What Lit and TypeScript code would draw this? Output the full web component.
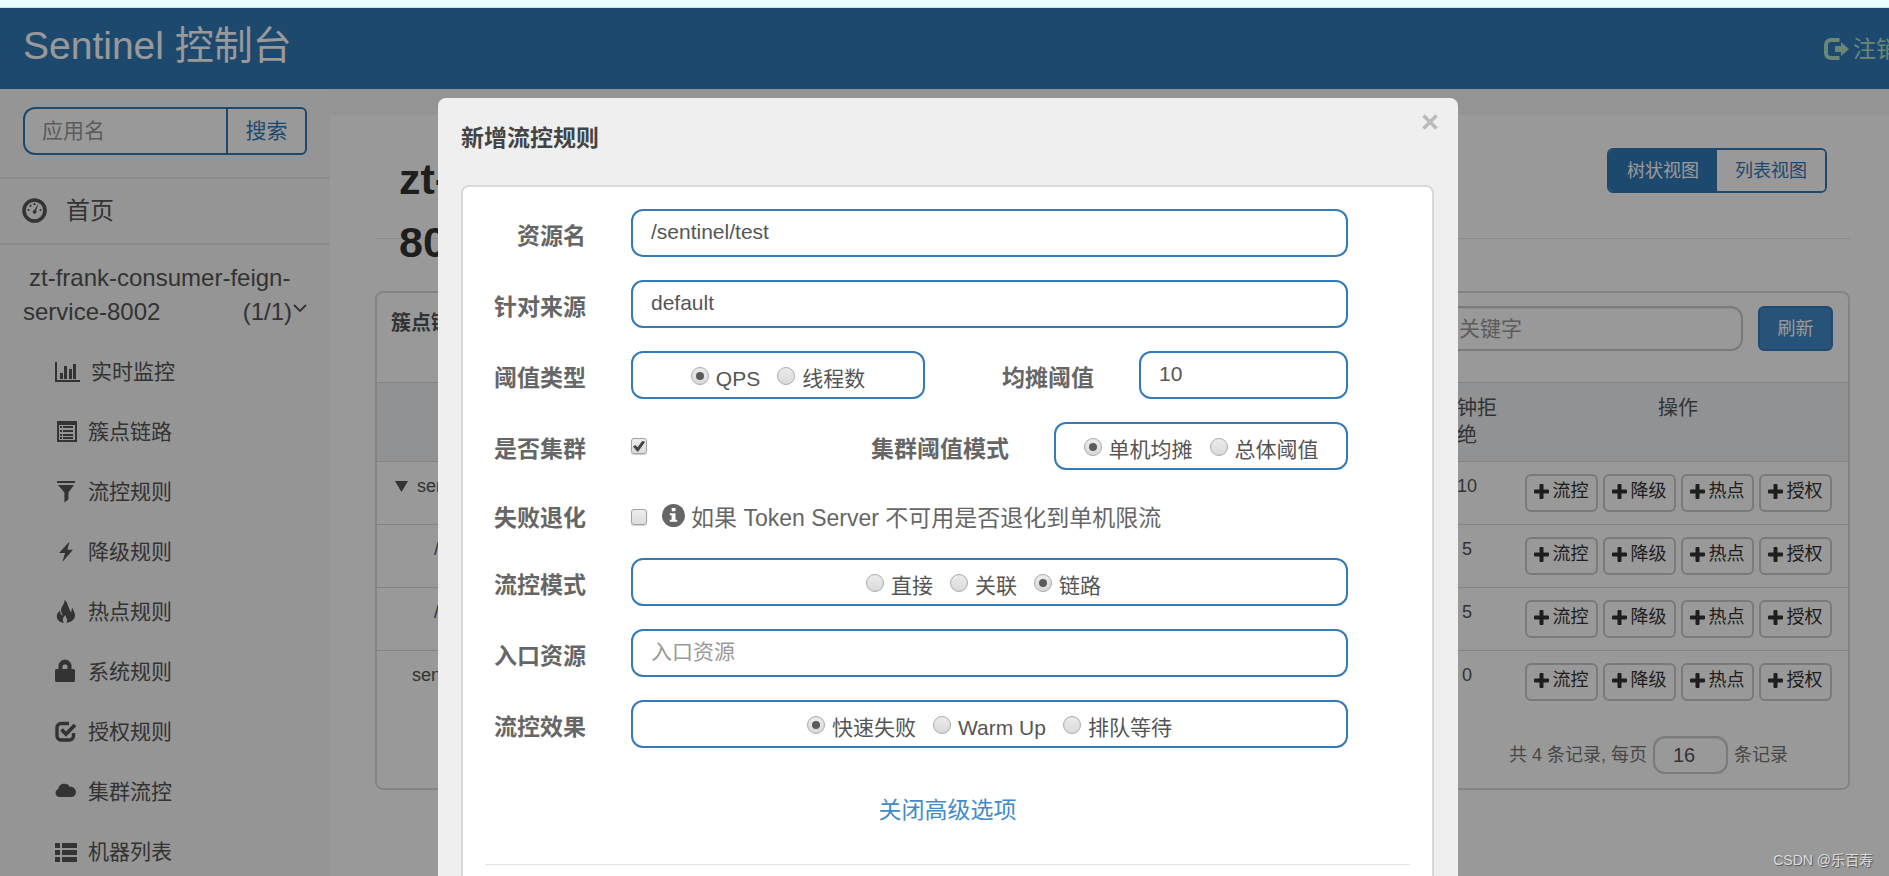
import { LitElement, html, css, svg } from "lit";
import { customElement } from "lit/decorators.js";

/* The sidebar icons are drawn on a 22px grid. */
const icons: Record<string, unknown> = {
  chart: svg`<path d="M0 1h2v18h23v2H0z"/><path d="M5 12h3v6H5zM9 5h3v13H9zM14 8h3v10h-3zM18 3h3v15h-3z"/>`,
  clipboard: svg`<path fill-rule="evenodd" d="M2 0h20v21H2zM4 4v15h16V4z"/><path d="M5 5h2v2H5zM8 5h10v2H8zM5 9h2v2H5zM8 9h10v2H8zM5 13h2v2H5zM8 13h10v2H8zM5 16h2v2H5zM8 16h10v2H8z"/>`,
  filter: svg`<path d="M2 0h18v2H2zM3 4h16l-5.600 7.600V18.500l-4 2.900V11.600z"/>`,
  flash: svg`<path d="M14.500 0.500 4 12h6L7.400 21 18 8.800h-5.600z"/>`,
  fire: svg`<path d="M9.500-1C10 3 6 5.500 6 9.500c0 2 1.500 3.500 1.500 5-1.500-.5-2.500-2-2.300-5C3 11 1.800 13 1.800 15.200 1.800 19 5 21.500 9 21.800 6.500 18.500 8.500 16 10.500 14c0 2.500 2.800 4 1 7.800 4.500-.3 8.500-3 8.500-7.500 0-3-2-4.500-2.300-7.300-1.200 1-1.500 2.500-1.200 4.200-2-.7-1.800-3.200-3-5.200C12.500 4 12.500 1 9.500-1z"/>`,
  lock: svg`<path fill-rule="evenodd" d="M3.500 8V5a6 6 0 0 1 13 0v3H18.500a1.500 1.500 0 0 1 1.500 1.500v10a1.500 1.500 0 0 1-1.500 1.500H1.500A1.500 1.500 0 0 1 0 19.500v-10A1.500 1.500 0 0 1 1.500 8zM7.500 8h5V5.500a2 2 0 0 0-2-2h-1a2 2 0 0 0-2 2z"/>`,
  check: svg`<path d="M14 2.500H6a4 4 0 0 0-4 4V15a4 4 0 0 0 4 4h8.500a4 4 0 0 0 4-4v-3" fill="none" stroke="currentColor" stroke-width="3.400"/><path d="M6.500 8.500l4.500 4.500L20 4" fill="none" stroke="currentColor" stroke-width="3.800"/>`,
  cloud: svg`<path d="M4 16a4.200 4.200 0 0 1-.8-8A6.200 6.200 0 0 1 14.800 6 5.100 5.100 0 1 1 17 16z"/>`,
  list: svg`<path d="M0 2h5v5H0zM7 2h15v5H7zM0 9h5v5H0zM7 9h15v5H7zM0 16h5v5H0zM7 16h15v5H7z"/>`,
};

interface MenuItem { icon: string; text: string; wide?: boolean }
const MENU: MenuItem[] = [
  { icon: "chart", text: "实时监控", wide: true },
  { icon: "clipboard", text: "簇点链路" },
  { icon: "filter", text: "流控规则" },
  { icon: "flash", text: "降级规则" },
  { icon: "fire", text: "热点规则" },
  { icon: "lock", text: "系统规则" },
  { icon: "check", text: "授权规则" },
  { icon: "cloud", text: "集群流控" },
  { icon: "list", text: "机器列表" },
];

const ROWS = [
  { level: "root", open: true, name: "sentinel_web_context", passed: 20, blocked: 10 },
  { level: "child", open: false, name: "/sentinel/test", passed: 10, blocked: 5 },
  { level: "child", open: false, name: "/sentinel/link", passed: 10, blocked: 5 },
  { level: "leaf", open: false, name: "sentinel_default_context", passed: 0, blocked: 0 },
];
const ACTIONS = ["流控", "降级", "热点", "授权"];

@customElement("app-root")
export class AppRoot extends LitElement {
  static styles = css`
    :host {
      display: flex;
      flex-direction: column;
      height: 100vh;
      overflow: hidden;
      font-family: "Liberation Sans", "Noto Sans CJK SC", sans-serif;
      font-size: 21px;
      line-height: 24px;
      color: #555;
      background: #fff;
    }
    * { box-sizing: border-box; }
    button, input { font: inherit; color: inherit; margin: 0; }
    a { color: inherit; text-decoration: none; }
    svg { display: block; fill: currentColor; flex: none; overflow: visible; }
    h1, h2, h3 { margin: 0; font-weight: 700; }

    .strip { flex: none; height: 8px; background: #eaffff; border-bottom: 1px solid #d3e2e6; }
    .stage { position: relative; flex: 1; min-height: 0; overflow: hidden; display: flex; flex-direction: column; }

    .topbar { flex: none; height: 81px; background: #337ab7; display: flex; justify-content: space-between; align-items: center; padding-left: 23px; }
    .brand { color: #fff; font-size: 39px; line-height: 60px; padding-bottom: 6px; }
    .logout { flex: none; width: 65px; display: flex; align-items: center; gap: 3px; color: #b1e0c4; font-size: 23px; white-space: nowrap; }
    .body { flex: 1; min-height: 0; display: flex; }

    .sidebar { flex: none; width: 330px; background: #f8f8f8; }
    .search { display: flex; height: 88px; padding: 18px 23px 22px; }
    .search-box { flex: 1; min-width: 0; height: 48px; border: 2px solid #337ab7; border-right: 0; border-radius: 12px 0 0 12px; background: #fff; padding: 0 17px; }
    .search-btn { width: 81px; height: 48px; border: 2px solid #337ab7; border-radius: 0 6px 6px 0; background: #fff; color: #337ab7; padding: 0; }
    input::placeholder { color: #999; opacity: 1; }
    .home { display: flex; align-items: center; gap: 19px; height: 68px; padding-left: 22px; border-top: 2px solid #e9e9e9; border-bottom: 2px solid #e9e9e9; font-size: 24px; }
    .home svg { margin-bottom: 2px; }
    .app { display: flex; align-items: flex-end; justify-content: space-between; padding: 0 23px 13px; font-size: 24px; line-height: 34px; height: 97px; }
    .app-name { display: flex; flex-direction: column; white-space: nowrap; width: 200px; }
    .app-name .lead { padding-left: 6px; }
    .count { display: flex; align-items: center; gap: 1px; }
    .menu { list-style: none; margin: 0; padding: 0; }
    .menu a { display: flex; align-items: center; gap: 11px; height: 60px; padding-left: 55px; }

    .main { flex: 1; min-width: 0; background: #fff; border-top: 26px solid #f7f7f7; padding: 0 39px 0 45px; }
    .page-head { display: flex; justify-content: space-between; align-items: flex-start; height: 124px; border-bottom: 1px solid #e7e7e7; padding: 33px 23px 0 24px; color: #333; }
    .page-head h1 { font-size: 43px; line-height: 63px; max-width: 50%; }
    .views { display: flex; border: 2px solid #337ab7; border-radius: 6px; height: 45px; overflow: hidden; }
    .views button { border: 0; background: #fff; color: #337ab7; font-size: 18px; padding: 0 18px; }
    .views .active { background: #337ab7; color: #fff; }

    .card { margin-top: 52px; border: 2px solid #ddd; border-radius: 8px; }
    .card-head { display: flex; gap: 15px; height: 89px; padding: 13px 15px 0 14px; }
    .card-head h2 { flex: 1; font-size: 20px; line-height: 34px; }
    .filter { width: 305px; height: 45px; border: 2px solid #ccc; border-radius: 12px; padding: 0 19px; background: #fff; box-shadow: inset 0 1px 1px rgba(0, 0, 0, 0.075); }
    .refresh { width: 75px; height: 45px; border: 2px solid #357ebd; border-radius: 6px; background: #428bca; color: #fff; font-size: 18px; padding: 0; }
    table { width: 100%; table-layout: fixed; border-collapse: separate; border-spacing: 0; }
    th { font-weight: 400; font-size: 20px; line-height: 27px; padding: 12px 6px; background: #f1f4f7; border-top: 1px solid #ddd; vertical-align: top; text-align: center; }
    td { font-size: 18px; line-height: 24px; padding: 12px 6px; border-top: 1px solid #ddd; vertical-align: top; text-align: center; }
    .col-num { width: 82px; }
    .col-act { width: 340px; }
    .name { text-align: left; }
    .root { padding-left: 18px; }
    .child { padding-left: 57px; }
    .leaf { padding-left: 35px; }
    .node { display: flex; align-items: center; gap: 9px; }
    .acts { display: flex; justify-content: center; gap: 5px; }
    .acts button { display: flex; align-items: center; justify-content: center; gap: 4px; width: 73px; height: 38px; border: 2px solid #ccc; border-radius: 6px; background: #fff; color: #333; font-size: 18px; padding: 0 0 4px; }
    .pager { display: flex; justify-content: flex-end; align-items: center; gap: 6px; padding: 23px 60px 14px 0; font-size: 18px; color: #777; }
    .pager label { display: flex; align-items: center; gap: 6px; }
    .pager input { width: 75px; height: 38px; border: 2px solid #ccc; border-radius: 12px; padding: 0 18px; font-size: 20px; color: #555; background: #fff; box-shadow: inset 0 1px 1px rgba(0, 0, 0, 0.075); }

    .overlay { position: absolute; inset: 0; display: flex; justify-content: center; background: rgba(0, 0, 0, 0.4); padding: 90px 0 0 7px; }
    .dialog { width: 1020px; display: flex; flex-direction: column; background: #efefef; border-radius: 8px 8px 0 0; padding: 0 24px 0 23px; }
    .dialog-head { flex: none; display: flex; justify-content: space-between; height: 87px; padding-top: 24px; }
    .dialog-head h3 { font-size: 23px; line-height: 32px; color: #444; }
    .close { align-self: flex-start; margin: -12px -8px 0 0; border: 0; background: none; padding: 4px; color: #bbb; }
    .panel { flex: 1; background: #fff; border: 2px solid #d8d8d8; border-bottom: 0; border-radius: 8px 8px 0 0; padding: 22px; color: #555; }
    .rows { display: flex; flex-direction: column; gap: 23px; padding-right: 62px; }
    .row { display: flex; gap: 45px; }
    .label { flex: none; width: 101px; text-align: right; font-size: 23px; font-weight: 700; line-height: 34px; padding-top: 10px; color: #666; white-space: nowrap; }
    .label.grow { flex: 1; width: auto; }
    .text { flex: 1; min-width: 0; height: 48px; border: 2px solid #337ab7; border-radius: 12px; background: #fff; padding: 0 18px 2px; }
    .text.short { flex: none; width: 209px; }
    .group { flex: 1; display: flex; justify-content: center; gap: 17px; height: 48px; margin: 0; border: 2px solid #337ab7; border-radius: 12px; padding: 13px 0 0; }
    .group.half { flex: none; width: 294px; }
    .group.trail { padding-right: 12px; }
    .group label { display: flex; gap: 7px; line-height: 26px; white-space: nowrap; }
    input[type="radio"] { appearance: none; flex: none; width: 18px; height: 18px; margin-top: 1px; border: 1px solid #aaa; border-radius: 50%; background: linear-gradient(#ececec, #d9d9d9); display: grid; place-items: center; }
    input[type="radio"]:checked::before { content: ""; width: 8px; height: 8px; border-radius: 50%; background: #5c5c5c; }
    input[type="checkbox"] { appearance: none; flex: none; width: 16px; height: 16px; border: 1px solid #a2a2a2; border-radius: 3px; background: linear-gradient(#eee, #dcdcdc); box-shadow: 0 1px 1px rgba(0, 0, 0, 0.2); display: grid; place-items: center; }
    input[type="checkbox"]:checked::before { content: ""; width: 12px; height: 11px; background: #444; clip-path: polygon(0 55%, 20% 42%, 38% 62%, 80% 0, 100% 14%, 44% 100%, 34% 100%); }
    .tick { margin-top: 16px; }
    .compact .label { padding-top: 8px; }
    .fallback { display: flex; gap: 15px; }
    .info { display: flex; gap: 6px; align-items: center; font-size: 23px; line-height: 34px; padding-top: 8px; height: 42px; color: #666; white-space: nowrap; }
    .info svg { margin-bottom: 5px; }
    .more { display: block; text-align: center; color: #428bca; font-size: 23px; line-height: 34px; margin: 45px 0 37px; }
    .rule { border: 0; border-top: 1px solid #e5e5e5; margin: 0; }

    .mark { position: absolute; right: 16px; bottom: 6px; font-size: 14px; line-height: 20px; color: #dcdcdc; text-shadow: 1px 1px 1px #555; }
  `;

  private radios(name: string, items: string[], checked: number) {
    return items.map(
      (t, i) => html`<label><input type="radio" name=${name} .checked=${i === checked} />${t}</label>`
    );
  }

  private sidebar() {
    return html`
      <nav class="sidebar">
        <form class="search">
          <input class="search-box" type="text" placeholder="应用名" aria-label="应用名" />
          <button class="search-btn" type="button">搜索</button>
        </form>
        <a class="home" href="#home">
          <svg width="25" height="25" viewBox="0 0 25 25">
            <circle cx="12.500" cy="12.500" r="10.500" fill="none" stroke="currentColor" stroke-width="3.600" />
            <path d="M16.500 5.500 14.200 12.600a1.900 1.900 0 1 1-1.800-.7z" />
            <circle cx="6.500" cy="12" r="1.100" /><circle cx="8.500" cy="7.800" r="1.100" />
            <circle cx="12.500" cy="6.200" r="1.100" /><circle cx="18.500" cy="12" r="1.100" />
          </svg>
          首页
        </a>
        <a class="app" href="#app">
          <span class="app-name"><span class="lead">zt-frank-consumer-feign-</span><span>service-8002</span></span>
          <span class="count">(1/1)
            <svg width="14" height="16" viewBox="0 0 14 16"><path d="M1 1l6 6 6-6" fill="none" stroke="currentColor" stroke-width="1.800" /></svg>
          </span>
        </a>
        <ul class="menu">
          ${MENU.map(
            (m) => html`<li><a href="#menu">
              <svg width=${m.wide ? 25 : 22} height="22" viewBox=${m.wide ? "0 0 25 22" : "0 0 22 22"}>${icons[m.icon]}</svg>${m.text}</a></li>`
          )}
        </ul>
      </nav>
    `;
  }

  private mainArea() {
    return html`
      <main class="main">
        <div class="page-head">
          <h1>zt-frank-consumer-feign-service-8002</h1>
          <div class="views">
            <button class="active" type="button">树状视图</button><button type="button">列表视图</button>
          </div>
        </div>
        <section class="card">
          <div class="card-head">
            <h2>簇点链路</h2>
            <input class="filter" type="text" placeholder="关键字" aria-label="关键字" />
            <button class="refresh" type="button">刷新</button>
          </div>
          <table>
            <colgroup>
              <col /><col class="col-num" /><col class="col-num" /><col class="col-num" /><col class="col-act" />
            </colgroup>
            <thead>
              <tr><th>资源名</th><th>线程数</th><th>分钟通过</th><th>分钟拒绝</th><th>操作</th></tr>
            </thead>
            <tbody>
              ${ROWS.map(
                (r) => html`<tr>
                  <td class="name ${r.level}">
                    <span class="node">
                      ${r.open ? html`<svg width="13" height="11" viewBox="0 0 13 11"><path d="M0 0h13L6.500 11z" /></svg>` : ""}${r.name}
                    </span>
                  </td>
                  <td>0</td><td>${r.passed}</td><td>${r.blocked}</td>
                  <td>
                    <div class="acts">
                      ${ACTIONS.map(
                        (a) => html`<button type="button">
                          <svg width="15" height="15" viewBox="0 0 15 15"><path d="M5.500 1a1 1 0 0 1 1-1h2a1 1 0 0 1 1 1v4.500H14a1 1 0 0 1 1 1v2a1 1 0 0 1-1 1H9.500V14a1 1 0 0 1-1 1h-2a1 1 0 0 1-1-1V9.500H1a1 1 0 0 1-1-1v-2a1 1 0 0 1 1-1h4.500z" /></svg>${a}</button>`
                      )}
                    </div>
                  </td>
                </tr>`
              )}
            </tbody>
          </table>
          <div class="pager"><label>共 4 条记录, 每页 <input type="text" .value=${"16"} /></label>条记录</div>
        </section>
      </main>
    `;
  }

  private dialog() {
    return html`
      <div class="overlay">
        <div class="dialog" role="dialog" aria-label="新增流控规则">
          <div class="dialog-head">
            <h3>新增流控规则</h3>
            <button class="close" type="button" aria-label="关闭">
              <svg width="16" height="16" viewBox="0 0 16 16"><path d="M1.500 1.500l13 13M14.500 1.500l-13 13" stroke="currentColor" stroke-width="3.600" /></svg>
            </button>
          </div>
          <form class="panel">
            <div class="rows">
              <div class="row">
                <label class="label" for="res">资源名</label>
                <input class="text" id="res" type="text" .value=${"/sentinel/test"} />
              </div>
              <div class="row">
                <label class="label" for="origin">针对来源</label>
                <input class="text" id="origin" type="text" .value=${"default"} />
              </div>
              <div class="row">
                <span class="label">阈值类型</span>
                <div class="group half" role="radiogroup" aria-label="阈值类型">${this.radios("grade", ["QPS", "线程数"], 0)}</div>
                <label class="label grow" for="count">均摊阈值</label>
                <input class="text short" id="count" type="text" .value=${"10"} />
              </div>
              <div class="row">
                <label class="label" for="cluster">是否集群</label>
                <input class="tick" id="cluster" type="checkbox" .checked=${true} />
                <span class="label grow">集群阈值模式</span>
                <div class="group half" role="radiogroup" aria-label="集群阈值模式">${this.radios("mode", ["单机均摊", "总体阈值"], 0)}</div>
              </div>
              <div class="row compact">
                <label class="label" for="fallback">失败退化</label>
                <div class="fallback">
                  <input class="tick" id="fallback" type="checkbox" />
                  <div class="info">
                    <svg width="23" height="23" viewBox="0 0 23 23"><path fill-rule="evenodd" d="M11.500 0a11.500 11.500 0 1 1 0 23 11.500 11.500 0 0 1 0-23zM9.700 4v3.300h3.800V4zM7.800 9.200v2h1.800v4.600H7.800v2h7.400v-2h-1.700V9.200z" /></svg>
                    如果 Token Server 不可用是否退化到单机限流
                  </div>
                </div>
              </div>
              <div class="row">
                <span class="label">流控模式</span>
                <div class="group trail" role="radiogroup" aria-label="流控模式">${this.radios("strategy", ["直接", "关联", "链路"], 2)}</div>
              </div>
              <div class="row">
                <label class="label" for="entry">入口资源</label>
                <input class="text" id="entry" type="text" placeholder="入口资源" />
              </div>
              <div class="row">
                <span class="label">流控效果</span>
                <div class="group" role="radiogroup" aria-label="流控效果">${this.radios("behavior", ["快速失败", "Warm Up", "排队等待"], 0)}</div>
              </div>
            </div>
            <a class="more" href="#simple">关闭高级选项</a>
            <hr class="rule" />
          </form>
        </div>
      </div>
    `;
  }

  render() {
    return html`
      <div class="strip"></div>
      <div class="stage">
        <header class="topbar">
          <span class="brand">Sentinel 控制台</span>
          <a class="logout" href="#logout">
            <svg width="26" height="22" viewBox="0 0 26 22"><path d="M15.500 2H7a5 5 0 0 0-5 5v8a5 5 0 0 0 5 5h8.500" fill="none" stroke="currentColor" stroke-width="4" /><path d="M11 8h6V4l8 7-8 7v-4h-6z" /></svg>注销</a>
        </header>
        <div class="body">${this.sidebar()}${this.mainArea()}</div>
        ${this.dialog()}
        <span class="mark">CSDN @乐百寿</span>
      </div>
    `;
  }
}
